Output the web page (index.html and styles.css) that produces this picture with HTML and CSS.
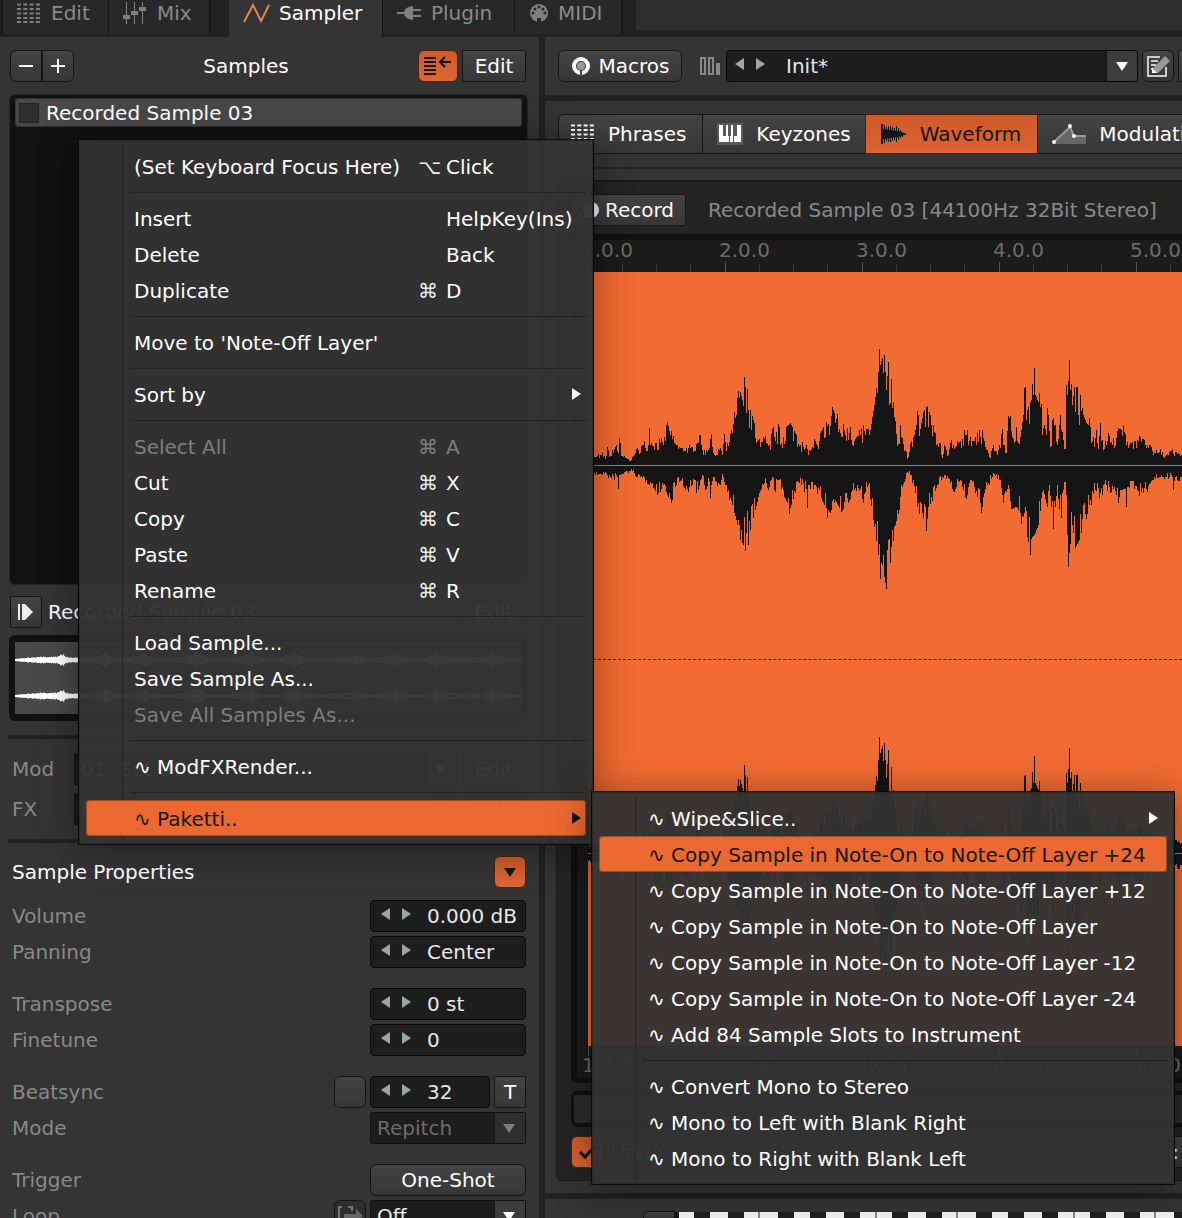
FILE: index.html
```html
<!DOCTYPE html>
<html lang="en">
<head>
<meta charset="utf-8">
<title>Sampler</title>
<link rel="stylesheet" href="styles.css">
</head>
<body>
<svg class="defs" aria-hidden="true">
  <symbol id="grid" viewBox="0 0 24 20"><path d="M0 1.500h24M0 6h24M0 10.500h24M0 15h24M0 19h24" stroke="currentColor" stroke-width="2" stroke-dasharray="4 2.300"/></symbol>
  <symbol id="down" viewBox="0 0 12 9"><path d="M0 0h12L6 9z" fill="currentColor"/></symbol>
  <symbol id="left" viewBox="0 0 9 12"><path d="M9 0v12L0 6z" fill="currentColor"/></symbol>
  <symbol id="right" viewBox="0 0 9 12"><path d="M0 0v12l9-6z" fill="currentColor"/></symbol>
</svg>
<div class="app">
  <nav class="tabs">
    <button class="tab tab-edit"><svg width="24" height="20"><use href="#grid"/></svg>Edit</button>
    <button class="tab tab-mix"><svg width="24" height="22" viewBox="0 0 24 22" fill="currentColor"><path d="M3 0h1v22H3zM11 0h1v22h-1zM19 0h1v22h-1zM0 13h7v4H0zM8 9h7v4H8zM16 5h7v4h-7z"/></svg>Mix</button>
    <button class="tab tab-sampler active"><svg width="28" height="22" viewBox="0 0 28 22" fill="none" stroke="#e8804f" stroke-width="2"><path d="M1 20L10 3l8 16L26 3"/></svg>Sampler</button>
    <button class="tab tab-plugin"><svg width="24" height="16" viewBox="0 0 24 16" fill="currentColor"><path d="M0 7h7q1-4 5-5l4-1v3h8v2h-8v4h8v2h-8v3l-4-1q-4-1-5-5H0z"/></svg>Plugin</button>
    <button class="tab tab-midi"><svg width="20" height="20" viewBox="0 0 20 20"><circle cx="10" cy="10" r="9" fill="currentColor"/><path d="M8 15h4v5H8z" fill="#282828"/><g fill="#282828"><circle cx="4" cy="10" r="1.500"/><circle cx="6" cy="6" r="1.500"/><circle cx="10" cy="4" r="1.500"/><circle cx="14" cy="6" r="1.500"/><circle cx="16" cy="10" r="1.500"/></g></svg>MIDI</button>
    <div class="tab-rest"></div>
  </nav>

  <div class="columns">
    <aside class="side">
      <header class="bar">
        <div class="pair"><button class="btn" aria-label="Remove sample"><svg width="14" height="14"><path d="M0 7h14" stroke="#fff" stroke-width="2"/></svg></button><button class="btn" aria-label="Add sample"><svg width="14" height="14"><path d="M0 7h14M7 0v14" stroke="#fff" stroke-width="2"/></svg></button></div>
        <h2 class="grow center">Samples</h2>
        <button class="btn hot wide" aria-label="Toggle list"><svg width="28" height="20" viewBox="0 0 28 20" fill="none" stroke="#161616" stroke-width="2"><path d="M0 2h12M0 6h12M0 10h12M0 14h12M0 18h12M27 6H16M21 1l-5 5 5 5"/></svg></button>
        <button class="btn square edit">Edit</button>
      </header>
      <div class="list"><div class="entry"><i class="mark"></i>Recorded Sample 03</div></div>
      <div class="bar preview-head">
        <button class="btn square play" aria-label="Play"><svg width="16" height="16" fill="#eee"><path d="M0 0h2v16H0zM4 0h3l8 8-8 8H4z"/></svg></button>
        <span class="grow">Recorded Sample 03</span>
        <button class="btn square edit">Edit</button>
      </div>
      <div class="preview"><svg class="mini" height="72" viewBox="0 0 505 72" preserveAspectRatio="none"><path id="mini" fill="#fff"/></svg></div>
      <hr class="rule">
      <div class="fields routing">
        <div class="row"><label for="mod">Mod</label><span class="pick route"><select id="mod"><option>01: Set 01</option></select><svg width="12" height="9"><use href="#down"/></svg></span><button class="btn square edit">Edit</button></div>
        <div class="row"><label for="fx">FX</label><span class="pick route"><select id="fx"><option>None</option></select><svg width="12" height="9"><use href="#down"/></svg></span><button class="btn square edit">Edit</button></div>
      </div>
      <hr class="rule">
      <header class="row props"><h2 class="grow">Sample Properties</h2><button class="btn hot small" aria-label="Collapse"><svg width="12" height="9"><use href="#down"/></svg></button></header>
      <div class="fields">
        <div class="row"><label for="vol">Volume</label><span class="num"><button aria-label="Less"><svg width="9" height="12"><use href="#left"/></svg></button><button aria-label="More"><svg width="9" height="12"><use href="#right"/></svg></button><input id="vol" value="0.000 dB"></span></div>
        <div class="row"><label for="pan">Panning</label><span class="num"><button aria-label="Less"><svg width="9" height="12"><use href="#left"/></svg></button><button aria-label="More"><svg width="9" height="12"><use href="#right"/></svg></button><input id="pan" value="Center"></span></div>
      </div>
      <div class="fields">
        <div class="row"><label for="tr">Transpose</label><span class="num"><button aria-label="Less"><svg width="9" height="12"><use href="#left"/></svg></button><button aria-label="More"><svg width="9" height="12"><use href="#right"/></svg></button><input id="tr" value="0 st"></span></div>
        <div class="row"><label for="fine">Finetune</label><span class="num"><button aria-label="Less"><svg width="9" height="12"><use href="#left"/></svg></button><button aria-label="More"><svg width="9" height="12"><use href="#right"/></svg></button><input id="fine" value="0"></span></div>
      </div>
      <div class="fields">
        <div class="row"><label for="beat">Beatsync</label><input type="checkbox" class="btn toggle" aria-label="Beatsync on"><span class="num short"><button aria-label="Less"><svg width="9" height="12"><use href="#left"/></svg></button><button aria-label="More"><svg width="9" height="12"><use href="#right"/></svg></button><input id="beat" value="32"></span><button class="btn square">T</button></div>
        <div class="row"><label for="mode">Mode</label><span class="pick off"><select id="mode" disabled><option>Repitch</option></select><svg width="12" height="9"><use href="#down"/></svg></span></div>
      </div>
      <div class="fields">
        <div class="row"><label for="trig">Trigger</label><button id="trig" class="btn full">One-Shot</button></div>
        <div class="row"><label for="loop">Loop</label><button class="btn loop" aria-label="Loop release"><svg width="26" height="22" viewBox="0 0 26 22" fill="none" stroke="#777" stroke-width="2"><path d="M5 2H2v18h3M11 2h4v4"/><path d="M7 9h12V4l7 7-7 7v-5H7z" fill="#666" stroke="none"/></svg></button><span class="pick"><select id="loop"><option>Off</option></select><svg width="12" height="9"><use href="#down"/></svg></span></div>
      </div>
    </aside>

    <main class="main">
      <section class="panel instrument">
        <button class="btn macros"><svg width="20" height="20" viewBox="0 0 20 20"><circle cx="10" cy="10" r="7" fill="none" stroke="#fff" stroke-width="4"/><circle cx="10" cy="10" r="4" fill="#999"/><path d="M9 14h2v6H9z" fill="#444"/></svg>Macros</button>
        <svg class="levels" width="20" height="18" fill="none" stroke="#888" stroke-width="2"><path d="M1 1h4v16H1zM9 1h4v16H9z"/><path d="M16 6h4v12h-4z" fill="#888" stroke="none"/></svg>
        <span class="num name"><button aria-label="Previous"><svg width="9" height="12"><use href="#left"/></svg></button><button aria-label="Next"><svg width="9" height="12"><use href="#right"/></svg></button><input aria-label="Instrument name" value="Init*"><button class="drop" aria-label="Choose"><svg width="12" height="9"><use href="#down"/></svg></button></span>
        <button class="btn note" aria-label="Comments"><svg width="26" height="24" viewBox="0 0 26 24" fill="none" stroke="#ccc" stroke-width="2"><path d="M15 3H3v19h18V13M6 7h7M6 11h5M6 15h3"/><path d="M8 19v-5L20 2l5 5-12 12z" fill="#999" stroke="none"/><path d="M7 19v-5l5 5z" fill="#fff" stroke="none"/></svg></button>
        <button class="btn square cut" aria-label="More"></button>
      </section>

      <section class="panel editor">
        <nav class="views">
          <button class="view"><svg width="24" height="20"><use href="#grid"/></svg>Phrases</button>
          <button class="view"><svg width="26" height="22" viewBox="0 0 26 22"><path d="M0 0h26v22H0z" fill="#5a5a5a"/><path d="M2 2h4v11h3v6H2zM9 2h2v11h1v6H9zM14 2h2v17h-3v-6h1zM20 2h4v17h-7v-6h3z" fill="#fff"/></svg>Keyzones</button>
          <button class="view active"><svg width="26" height="20" viewBox="0 0 26 20" fill="none" stroke="#161616"><path d="M1 0v20" stroke-width="2"/><path d="M3.500 1v18M5.500 3v14M7.500 2v16M9.500 2v16M11.500 3v14M13.500 4v12M15.500 2v16M17.500 4v12M19.500 6v8M21.500 8v5M23.500 9v2"/><path d="M2 5l15 2 9 3-9 3-15 2z" fill="#161616" stroke="none"/></svg>Waveform</button>
          <button class="view"><svg width="34" height="20" viewBox="0 0 34 20"><path d="M2 19L18 3l4 9h12v8H2z" fill="#666"/><path d="M2 18L18 3l4 9h12" fill="none" stroke="#999" stroke-width="2"/><g fill="#fff"><circle cx="2" cy="18" r="2"/><circle cx="18" cy="2" r="2"/><circle cx="22" cy="12" r="2"/></g></svg>Modulation</button>
        </nav>
        <hr class="line">
        <div class="wave-panel">
          <header class="wave-head"><button class="btn square record"><i class="dot"></i>Record</button><span class="info">Recorded Sample 03 [44100Hz 32Bit Stereo]</span></header>
          <div class="wave-box">
            <div class="ruler"><span>1.0.0</span><span>2.0.0</span><span>3.0.0</span><span>4.0.0</span><span>5.0.0</span></div>
            <div class="wave">
              <div class="channel"><svg width="600" height="270" viewBox="588 330 600 270" shape-rendering="crispEdges"><path class="peaks" fill="#151515"/></svg></div>
              <div class="channel"><svg width="600" height="270" viewBox="588 330 600 270" shape-rendering="crispEdges"><path class="peaks" fill="#151515"/></svg></div>
            </div>
            <div class="ruler foot"><span>1.0.0</span><span>2.0.0</span><span>3.0.0</span><span>4.0.0</span><span>5.0.0</span></div>
          </div>
          <div class="scroll"><div class="thumb"></div></div>
          <footer class="tools"><button class="btn hot small" aria-label="Snap"><svg width="20" height="16" fill="none" stroke="#161616" stroke-width="3"><path d="M3 8l5 5L18 2"/></svg></button><span class="grow">Undo</span><button class="btn square cut" aria-label="Tools">:</button></footer>
        </div>
      </section>

      <section class="panel keys"><button class="btn key-btn" aria-label="Octave"></button><div class="piano"></div></section>
    </main>
  </div>

  <ul class="menu context" role="menu">
    <li><button><span>(Set Keyboard Focus Here)</span><kbd>⌥</kbd><kbd>Click</kbd></button></li>
    <li class="sep"></li>
    <li><button><span>Insert</span><kbd></kbd><kbd>HelpKey(Ins)</kbd></button></li>
    <li><button><span>Delete</span><kbd></kbd><kbd>Back</kbd></button></li>
    <li><button><span>Duplicate</span><kbd>⌘</kbd><kbd>D</kbd></button></li>
    <li class="sep"></li>
    <li><button><span>Move to 'Note-Off Layer'</span></button></li>
    <li class="sep"></li>
    <li><button><span>Sort by</span><svg class="more" width="9" height="12"><use href="#right"/></svg></button></li>
    <li class="sep"></li>
    <li><button disabled><span>Select All</span><kbd>⌘</kbd><kbd>A</kbd></button></li>
    <li><button><span>Cut</span><kbd>⌘</kbd><kbd>X</kbd></button></li>
    <li><button><span>Copy</span><kbd>⌘</kbd><kbd>C</kbd></button></li>
    <li><button><span>Paste</span><kbd>⌘</kbd><kbd>V</kbd></button></li>
    <li><button><span>Rename</span><kbd>⌘</kbd><kbd>R</kbd></button></li>
    <li class="sep"></li>
    <li><button><span>Load Sample...</span></button></li>
    <li><button><span>Save Sample As...</span></button></li>
    <li><button disabled><span>Save All Samples As...</span></button></li>
    <li class="sep"></li>
    <li><button><span>∿ ModFXRender...</span></button></li>
    <li class="sep"></li>
    <li><button class="on"><span>∿ Paketti..</span><svg class="more" width="9" height="12"><use href="#right"/></svg></button></li>
  </ul>

  <ul class="menu sub" role="menu">
    <li><button><span>∿ Wipe&amp;Slice..</span><svg class="more" width="9" height="12"><use href="#right"/></svg></button></li>
    <li><button class="on"><span>∿ Copy Sample in Note-On to Note-Off Layer +24</span></button></li>
    <li><button><span>∿ Copy Sample in Note-On to Note-Off Layer +12</span></button></li>
    <li><button><span>∿ Copy Sample in Note-On to Note-Off Layer</span></button></li>
    <li><button><span>∿ Copy Sample in Note-On to Note-Off Layer -12</span></button></li>
    <li><button><span>∿ Copy Sample in Note-On to Note-Off Layer -24</span></button></li>
    <li><button><span>∿ Add 84 Sample Slots to Instrument</span></button></li>
    <li class="sep"></li>
    <li><button><span>∿ Convert Mono to Stereo</span></button></li>
    <li><button><span>∿ Mono to Left with Blank Right</span></button></li>
    <li><button><span>∿ Mono to Right with Blank Left</span></button></li>
  </ul>
</div>
<script src="wave.js"></script>
</body>
</html>
```
FILE: styles.css
```css
* { box-sizing: border-box; margin: 0; }
body { background: #343434; overflow: hidden; }
body, button, input, select, kbd { font: 20px/24px "DejaVu Sans", sans-serif; color: #fff; }
button, input, select { padding: 0; border: 0; background: none; appearance: none; white-space: nowrap; }
h2 { font-size: 20px; font-weight: normal; }
hr { border: 0; }
svg { flex: none; display: block; }
.defs { position: absolute; width: 0; height: 0; }
.app { position: relative; height: 100vh; display: flex; flex-direction: column; overflow: hidden; }
.grow { flex: 1; }
.center { text-align: center; }

/* top tabs */
.tabs { height: 37px; flex: none; display: flex; align-items: flex-start; background: #212121; padding-left: 2px; }
.tab { height: 34px; display: flex; align-items: center; gap: 10px; padding: 0 0 8px 14px; background: #282828; border: solid #151515; border-width: 0 1px; color: #8a8a8a; }
.tab + .tab { border-left: 0; }
.tab svg { color: #808080; }
.tab-edit { width: 107px; }
.tab-mix { width: 101px; margin-right: 19px; }
.tab-sampler { width: 154px; height: 37px; padding-bottom: 11px; gap: 8px; }
.tab-plugin { width: 132px; }
.tab-midi { width: 107px; margin-right: 14px; gap: 9px; }
.tab.active { background: #343434; color: #fff; }
.tab-rest { flex: 1; height: 30px; background: #2e2e2e; }

.columns { flex: 1; min-height: 0; display: flex; }
.side { width: 539px; flex: none; padding: 13px 13px 0 10px; overflow: hidden; background: #343434; }
.main { flex: 1; min-width: 0; display: flex; flex-direction: column; gap: 6px; padding-left: 6px; background: #212121; }
.panel { background: #343434; overflow: hidden; }

/* controls */
.btn { height: 32px; flex: none; display: flex; align-items: center; justify-content: center; background: linear-gradient(#434343, #373737); border: 1px solid #161616; border-radius: 6px; min-width: 32px; }
.square { border-radius: 1px; }
.hot { background: linear-gradient(#cf5a2a, #dd6633); border-color: #4a2415; color: #161616; }
.wide { width: 40px; }
.edit { width: 64px; }
.small { width: 32px; }
.toggle { width: 32px; }
.bar { display: flex; align-items: center; gap: 4px; }
.pair { display: flex; }
.pair .btn:first-child { border-radius: 6px 0 0 6px; }
.pair .btn:last-child { border-radius: 0 6px 6px 0; }

.num { height: 32px; width: 156px; flex: none; display: flex; align-items: center; gap: 12px; padding-left: 10px; background: #1d1d1d; border: 1px solid #080808; border-radius: 4px; color: #9aa8a8; overflow: hidden; }
.num button { color: #9aa8a8; padding-bottom: 4px; flex: none; }
.num input { flex: 1; min-width: 0; width: 0; padding-left: 4px; color: #e8e8e8; }
.num.short { width: 120px; }
.pick { width: 156px; height: 32px; flex: none; display: flex; align-items: center; position: relative; background: #1d1d1d; border: 1px solid #101010; border-radius: 2px; }
.pick select { width: 100%; height: 30px; padding: 0 32px 0 6px; color: #e8e8e8; background: linear-gradient(90deg, #161616 1px, #3d3d3d 1px) right / 31px 100% no-repeat; }
.pick svg { position: absolute; right: 10px; pointer-events: none; }
.off select { color: #6c6c6c; opacity: 1; background-image: linear-gradient(90deg, #161616 1px, #2e2e2e 1px); }
.off svg { color: #7d7d7d; }

/* sample list and preview */
.list { height: 491px; margin: 12px -2px 11px -1px; padding: 3px 5px; background: #111; border: 1px solid #242424; border-radius: 6px; }
.entry { height: 29px; display: flex; align-items: center; gap: 7px; padding: 1px 0 0 4px; background: #484848; border-radius: 4px; box-shadow: inset 0 0 0 1px #333; }
.mark { width: 20px; height: 20px; background: #2e2e2e; border: 1px solid #242424; }
.preview-head { gap: 6px; }
.preview { height: 86px; margin: 7px -2px 14px -1px; padding: 7px 6px; background: #111; border-radius: 6px; }
.mini { width: 100%; background: #494949; }
.rule { height: 4px; margin: 0 -2px; background: #222; }
.row { height: 32px; display: flex; align-items: center; gap: 4px; }
.row label { flex: 1; padding-left: 2px; color: #898989; }
.row h2 { padding-left: 2px; }
.props { margin: 13px 0 12px; }
.fields { display: flex; flex-direction: column; gap: 4px; margin-bottom: 20px; }
.routing { gap: 8px; margin: 14px 0; }
.route { width: 384px; }
.full { width: 156px; }
.loop { width: 32px; background: #2e2e2e; }

/* instrument bar */
.instrument { height: 58px; flex: none; display: flex; align-items: center; padding-left: 13px; gap: 4px; }
.macros { width: 124px; gap: 8px; }
.levels { margin: 0 2px 0 14px; }
.name { flex: 1; padding-left: 8px; }
.name input { padding-left: 9px; }
.num .drop { width: 31px; height: 32px; display: flex; align-items: center; justify-content: center; padding: 0; color: #fff; background: #3d3d3d; border-left: 1px solid #161616; }
.note { width: 32px; }
.cut { border-right: 0; min-width: 4px; width: 4px; }

/* editor */
.editor { flex: 1; min-height: 0; display: flex; flex-direction: column; padding-bottom: 12px; }
.views { display: flex; flex: none; margin: 13px 0 13px 13px; }
.view { height: 40px; flex: none; display: flex; align-items: center; gap: 13px; padding: 0 14px; background: linear-gradient(#434343, #373737); border: 1px solid #161616; margin-right: -1px; }
.view:first-child { border-radius: 5px 0 0 0; padding: 0 16px 0 12px; }
.view.active { background: linear-gradient(#cf5a2a, #d96331); color: #161616; border-color: #4a1d0c; position: relative; padding: 0 16px 0 15px; }
.line { height: 2px; flex: none; background: #222; }
.wave-panel { flex: 1; min-height: 0; display: flex; flex-direction: column; margin: 11px 0 0 11px; padding: 12px 0 12px 14px; background: #242424; border: solid #1a1a1a; border-width: 2px 0 1px 1px; border-radius: 6px 0 0 6px; }
.wave-head { display: flex; align-items: center; gap: 22px; }
.record { width: 115px; gap: 6px; }
.dot { width: 16px; height: 16px; border-radius: 8px; background: #eee; }
.info { color: #8a8a8a; white-space: nowrap; }
.wave-box { flex: 1; min-height: 0; display: flex; flex-direction: column; margin-top: 8px; background: #1b1b1b; border: solid #111; border-width: 6px 0 5px 6px; border-radius: 6px 0 0 6px; overflow: hidden; }
.ruler { height: 32px; flex: none; display: flex; padding-left: 11px; overflow: hidden; color: #6c6c6c; line-height: 20px; }
.ruler span { width: 137px; flex: none; text-indent: -6px; background: linear-gradient(#555, #555) 0 100% / 1px 10px no-repeat, repeating-linear-gradient(90deg, #3a3a3a 0 1px, transparent 1px 34px) 0 100% / 136px 8px no-repeat; }
.foot { line-height: 38px; }
.foot span { background-position: 0 0; }
.wave { flex: 1; min-height: 0; display: flex; flex-direction: column; margin-left: 11px; background: #f26b32; }
.channel { flex: 1; min-height: 0; display: flex; align-items: center; overflow: hidden; }
.channel + .channel { border-top: 1px dashed #4a2412; }
.scroll { height: 36px; flex: none; margin-top: 8px; padding: 4px 0 4px 3px; background: #111; border-radius: 6px 0 0 6px; }
.thumb { height: 28px; background: #2c2c2c; border-radius: 3px 0 0 3px; }
.tools { display: flex; align-items: center; gap: 8px; margin-top: 9px; color: #888; }
.tools .cut { width: 14px; }
.keys { height: 19px; flex: none; display: flex; align-items: flex-end; padding-left: 98px; }
.key-btn { width: 32px; height: 7px; border-bottom: 0; border-radius: 6px 0 0 0; }
.piano { flex: 1; height: 6px; border-left: 4px solid #151515; background: repeating-linear-gradient(90deg, #f2f2f2 0 15px, #202020 15px 31px, #f2f2f2 31px 49px, #202020 49px 65px, #f2f2f2 65px 79px, #888 79px 81px, #f2f2f2 81px 99px, #202020 99px 115px, #f2f2f2 115px 131px, #202020 131px 147px, #f2f2f2 147px 165px, #202020 165px 181px, #f2f2f2 181px 196px, #888 196px 198px); }

/* menus */
.menu { position: absolute; list-style: none; padding: 8px 7px; background: linear-gradient(#262626, #262626) 43px 4px / 1px calc(100% - 8px) no-repeat, rgba(51, 51, 51, .965); border: 1px solid #0a0a0a; box-shadow: inset 0 0 0 1px #2b2b2b, 0 4px 36px rgba(0, 0, 0, .4); }
.menu button { width: 100%; height: 36px; display: flex; align-items: center; padding: 2px 5px 0 48px; text-align: left; border-radius: 4px; }
.menu span { flex: 1; white-space: pre; }
.menu kbd:nth-of-type(1) { width: 28px; color: #eee; }
.menu kbd:nth-of-type(2) { width: 135px; }
.menu button:disabled, .menu button:disabled kbd { color: #7e7e7e; }
.menu .on { background: rgba(242, 107, 50, .97); box-shadow: inset 0 0 0 1px #9a4722; color: #151515; }
.more { margin-bottom: 2px; }
.sep { height: 16px; margin-left: 44px; background: linear-gradient(#222, #222) 0 8px / 100% 1px no-repeat; }
.context { left: 78px; top: 139px; width: 516px; }
.sub { left: 591px; top: 791px; width: 584px; }
.sub button { padding-left: 49px; padding-right: 9px; }
```
FILE: wave.js
```js
// Peak levels as "x:height" pairs, above and below the zero line.
const up = "588:8 595:8 600:10 606:9 607:18 610:9 616:20 618:12 619:27 621:9 631:5 635:12 642:20 648:20 649:37 651:22 660:22 665:24 667:43 670:30 674:22 680:17 690:17 697:22 699:30 702:15 708:15 711:31 713:12 716:10 720:17 722:10 724:31 726:14 731:35 736:50 740:73 742:65 745:78 747:76 748:55 750:55 754:42 756:22 758:25 763:28 770:15 772:36 775:24 779:38 781:22 786:38 790:42 795:32 800:20 810:14 815:24 818:16 820:32 826:43 829:30 832:58 836:46 840:32 844:35 850:38 852:20 856:28 860:30 866:36 870:35 874:60 878:93 882:107 884:110 886:75 888:103 889:60 891:86 892:57 895:44 898:21 900:40 904:14 908:8 910:22 914:30 918:50 920:36 923:53 927:59 930:50 933:40 936:20 940:22 942:7 944:20 948:10 950:22 955:18 960:24 965:30 970:28 975:28 979:35 983:27 987:15 989:8 992:17 998:15 1002:36 1006:12 1007:34 1009:47 1012:28 1016:38 1020:28 1023:50 1025:78 1027:55 1031:65 1033:70 1034:97 1035:70 1040:58 1043:37 1048:50 1050:18 1053:47 1057:20 1060:50 1064:16 1065:16 1066:80 1068:84 1069:105 1070:75 1072:60 1074:78 1077:78 1079:40 1080:70 1083:50 1086:42 1090:38 1094:18 1096:35 1098:16 1100:42 1104:16 1108:32 1112:20 1118:37 1124:33 1130:22 1137:25 1145:20 1150:20 1155:12 1160:16 1165:9 1170:14 1176:13 1188:6";
const down = "588:8 595:10 604:8 611:13 617:12 618:24 619:10 630:6 640:12 650:17 657:30 662:18 668:32 670:34 676:20 680:16 685:25 692:20 698:25 702:10 706:24 709:16 710:33 711:20 715:16 720:20 722:9 728:25 732:40 736:55 740:75 743:80 746:68 750:65 755:45 759:28 764:18 768:25 772:12 774:25 778:15 784:32 790:43 795:28 799:18 806:24 807:43 808:20 815:20 824:40 830:48 835:35 841:47 848:38 854:25 857:20 862:34 868:20 873:55 878:90 882:100 886:124 888:75 890:98 892:65 895:60 899:45 902:22 905:14 909:6 912:18 918:38 922:48 926:66 928:42 932:36 937:20 945:10 950:18 955:24 960:15 965:32 970:15 975:28 982:42 987:20 992:12 1000:15 1003:38 1008:20 1011:44 1016:42 1023:52 1028:77 1034:70 1038:60 1043:25 1047:42 1049:20 1053:64 1057:20 1061:53 1064:17 1065:17 1067:70 1068:102 1069:88 1072:60 1075:83 1079:75 1081:68 1083:40 1086:54 1090:35 1095:25 1100:28 1106:20 1110:28 1114:22 1118:38 1120:25 1125:24 1126:42 1127:22 1137:25 1143:28 1152:15 1160:12 1165:12 1172:12 1173:25 1175:12 1188:17";

const parse = text => text.split(" ").map(pair => pair.split(":").map(Number));

function level(points, x) {
  for (let i = 1; i < points.length; i++) {
    const [x0, a] = points[i - 1];
    const [x1, b] = points[i];
    if (x <= x1) return a + (b - a) * (x - x0) / (x1 - x0);
  }
  return points[points.length - 1][1];
}

let seed = 7;
function jitter() {
  seed = (seed * 16807) % 2147483647;
  const r = seed / 2147483647;
  return r < 0.2 ? 0.68 : r < 0.45 ? 0.85 : r < 0.85 ? 1 : 1.2;
}

const tops = parse(up);
const bottoms = parse(down);
// Listed peaks are exact; only the columns between them vary.
const column = (points, x) => {
  const spread = jitter();
  const value = level(points, x);
  return Math.round(points.some(p => p[0] === x) ? value : value * spread);
};
const zero = 465;
let body = "";
for (let x = 588; x < 1188; x++) {
  body += `M${x} ${zero - column(tops, x)}h1V${zero + column(bottoms, x)}h-1z`;
}
document.querySelectorAll(".peaks").forEach(path => {
  path.setAttribute("d", body);
  const axis = document.createElementNS("http://www.w3.org/2000/svg", "path");
  axis.setAttribute("d", `M588 ${zero}h600v1H588z`);
  axis.setAttribute("fill", "#8a8480");
  path.after(axis);
});

// Overview of both channels.
let mini = "";
const bursts = [[47, 6], [90, 8], [128, 5], [180, 8], [235, 7], [278, 6], [340, 3], [378, 6], [419, 9], [450, 4], [475, 6]];
for (let x = 0; x < 505; x++) {
  let h = 1 + 2 * Math.abs(Math.sin(x / 16)) * jitter();
  for (const [c, size] of bursts) h += size * Math.exp(-Math.abs(x - c) / 5) * jitter() * 0.8;
  mini += `M${x} ${18 - h}h1v${2 * h}h-1zM${x} ${54 - h}h1v${2 * h}h-1z`;
}
document.getElementById("mini").setAttribute("d", mini);
```
